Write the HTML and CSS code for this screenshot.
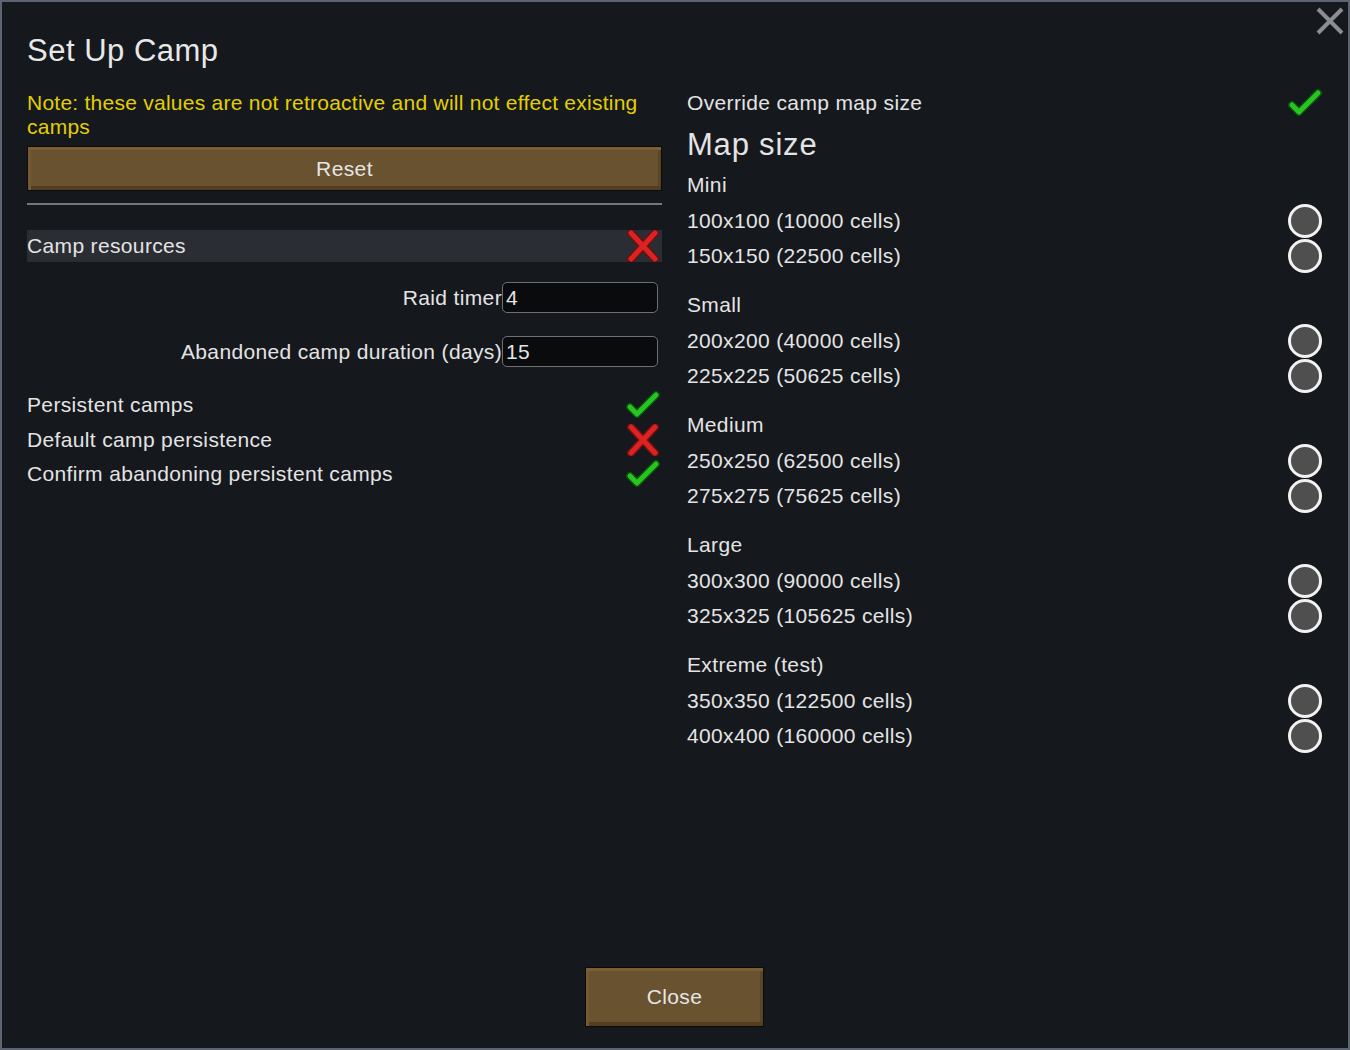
FILE: index.html
```html
<!DOCTYPE html>
<html>
<head>
    <title>Set Up Camp</title>
    <link rel="stylesheet" href="styles.css">
</head>
<body>
    <svg class="defs" width="0" height="0">
        <symbol id="icon-check" viewBox="0 0 34 32">
            <path d="M4 18 L11 25 L30 6" fill="none" stroke="#0b4f0a" stroke-width="8" stroke-linecap="round" stroke-linejoin="round"/>
            <path d="M4 18 L11 25 L30 6" fill="none" stroke="#27c422" stroke-width="5" stroke-linecap="round" stroke-linejoin="round"/>
        </symbol>
        <symbol id="icon-cross" viewBox="0 0 34 32">
            <path d="M5 3 L29 29 M29 3 L5 29" fill="none" stroke="#6e1010" stroke-width="8" stroke-linecap="round"/>
            <path d="M5 3 L29 29 M29 3 L5 29" fill="none" stroke="#dc2222" stroke-width="5" stroke-linecap="round"/>
        </symbol>
    </svg>

    <div class="window">
        <svg class="close-x" viewBox="0 0 30 30" width="30" height="30">
            <path d="M3 3 L27 27 M27 3 L3 27" stroke="#8a8d92" stroke-width="4"/>
        </svg>

        <h1 class="title">Set Up Camp</h1>

        <div class="columns">
            <div class="col">
                <div class="note">Note: these values are not retroactive and will not effect existing camps</div>
                <button class="btn reset-btn">Reset</button>
                <div class="separator"></div>

                <div class="section-row">
                    <span>Camp resources</span>
                    <svg class="icon"><use href="#icon-cross"/></svg>
                </div>

                <div class="field-row first-field">
                    <span class="field-label">Raid timer</span>
                    <div class="field-input">4</div>
                </div>
                <div class="field-row">
                    <span class="field-label">Abandoned camp duration (days)</span>
                    <div class="field-input">15</div>
                </div>

                <div class="toggles">
                    <div class="toggle-row">
                        <span>Persistent camps</span>
                        <svg class="icon"><use href="#icon-check"/></svg>
                    </div>
                    <div class="toggle-row">
                        <span>Default camp persistence</span>
                        <svg class="icon"><use href="#icon-cross"/></svg>
                    </div>
                    <div class="toggle-row">
                        <span>Confirm abandoning persistent camps</span>
                        <svg class="icon"><use href="#icon-check"/></svg>
                    </div>
                </div>
            </div>

            <div class="col">
                <div class="toggle-row override-row">
                    <span>Override camp map size</span>
                    <svg class="icon"><use href="#icon-check"/></svg>
                </div>
                <div class="subtitle">Map size</div>

                <div class="size-group">
                    <div class="group-label">Mini</div>
                    <div class="radio-row"><span>100x100 (10000 cells)</span><span class="radio"></span></div>
                    <div class="radio-row"><span>150x150 (22500 cells)</span><span class="radio"></span></div>
                </div>
                <div class="size-group">
                    <div class="group-label">Small</div>
                    <div class="radio-row"><span>200x200 (40000 cells)</span><span class="radio"></span></div>
                    <div class="radio-row"><span>225x225 (50625 cells)</span><span class="radio"></span></div>
                </div>
                <div class="size-group">
                    <div class="group-label">Medium</div>
                    <div class="radio-row"><span>250x250 (62500 cells)</span><span class="radio"></span></div>
                    <div class="radio-row"><span>275x275 (75625 cells)</span><span class="radio"></span></div>
                </div>
                <div class="size-group">
                    <div class="group-label">Large</div>
                    <div class="radio-row"><span>300x300 (90000 cells)</span><span class="radio"></span></div>
                    <div class="radio-row"><span>325x325 (105625 cells)</span><span class="radio"></span></div>
                </div>
                <div class="size-group">
                    <div class="group-label">Extreme (test)</div>
                    <div class="radio-row"><span>350x350 (122500 cells)</span><span class="radio"></span></div>
                    <div class="radio-row"><span>400x400 (160000 cells)</span><span class="radio"></span></div>
                </div>
            </div>
        </div>

        <div class="footer">
            <button class="btn close-btn">Close</button>
        </div>
    </div>
</body>
</html>
```

FILE: styles.css
```css
body {
    margin: 0;
    padding: 0;
    background-color: #15181d;
    font-family: "Liberation Sans", Arial, sans-serif;
    color: #e4e4e4;
}

.defs {
    position: absolute;
}

.window {
    position: relative;
    box-sizing: border-box;
    width: 1350px;
    height: 1050px;
    border: 2px solid #5b6470;
    background-color: #15181d;
    padding: 29px 26px 21px 25px;
    display: flex;
    flex-direction: column;
    font-size: 21px;
    letter-spacing: 0.35px;
}

.close-x {
    position: absolute;
    top: 4px;
    right: 3px;
}

.title {
    margin: 0;
    font-size: 31px;
    font-weight: normal;
    line-height: 40px;
    height: 40px;
    letter-spacing: 0.5px;
    color: #e8e8e8;
}

.columns {
    flex: 1;
    display: flex;
    gap: 25px;
    margin-top: 16px;
}

.col {
    width: 635px;
    display: flex;
    flex-direction: column;
}

.note {
    color: #e3cf00;
    line-height: 24px;
    margin-top: 4px;
    letter-spacing: 0.25px;
}

.btn {
    font-family: inherit;
    font-size: 21px;
    letter-spacing: 0.4px;
    color: #e6e6e6;
    background-color: #69522f;
    border: 1px solid #0c0b08;
    box-shadow: inset 0 3px 0 #7a5f35, inset 3px 0 0 #735a33, inset 0 -4px 0 #513e22, inset -3px 0 0 #5a4526;
    padding: 0;
    cursor: pointer;
}

.reset-btn {
    margin-top: 7px;
    height: 45px;
    width: 635px;
}

.separator {
    margin-top: 12px;
    height: 2px;
    background-color: #74777c;
}

.section-row {
    margin-top: 25px;
    height: 32px;
    background-color: #2a2d33;
    display: flex;
    align-items: center;
    justify-content: space-between;
    padding-right: 2px;
}

.icon {
    width: 34px;
    height: 32px;
}

.field-row {
    display: flex;
    justify-content: flex-end;
    align-items: center;
    height: 31px;
    margin-top: 23px;
    margin-right: 4px;
}

.first-field {
    margin-top: 20px;
}

.field-input {
    box-sizing: border-box;
    width: 156px;
    height: 31px;
    background-color: #0a0b0d;
    border: 1px solid #6e7074;
    border-radius: 5px;
    padding-left: 3px;
    line-height: 30px;
}

.toggles {
    margin-top: 21px;
}

.toggle-row {
    display: flex;
    align-items: center;
    justify-content: space-between;
    height: 34.5px;
    padding-right: 2px;
}

.override-row {
    height: 32px;
    padding-right: 0;
}

.subtitle {
    font-size: 31px;
    line-height: 40px;
    letter-spacing: 0.8px;
    margin-top: 6px;
    margin-bottom: 2px;
}

.size-group {
    margin-bottom: 14px;
}

.group-label {
    height: 36px;
    line-height: 35px;
}

.radio-row {
    display: flex;
    align-items: center;
    justify-content: space-between;
    height: 35px;
}

.radio {
    box-sizing: border-box;
    width: 34px;
    height: 34px;
    border-radius: 50%;
    border: 3px solid #f2f2f2;
    background-color: #4f4f4f;
}

.footer {
    display: flex;
    justify-content: center;
}

.close-btn {
    width: 179px;
    height: 60px;
}
```
